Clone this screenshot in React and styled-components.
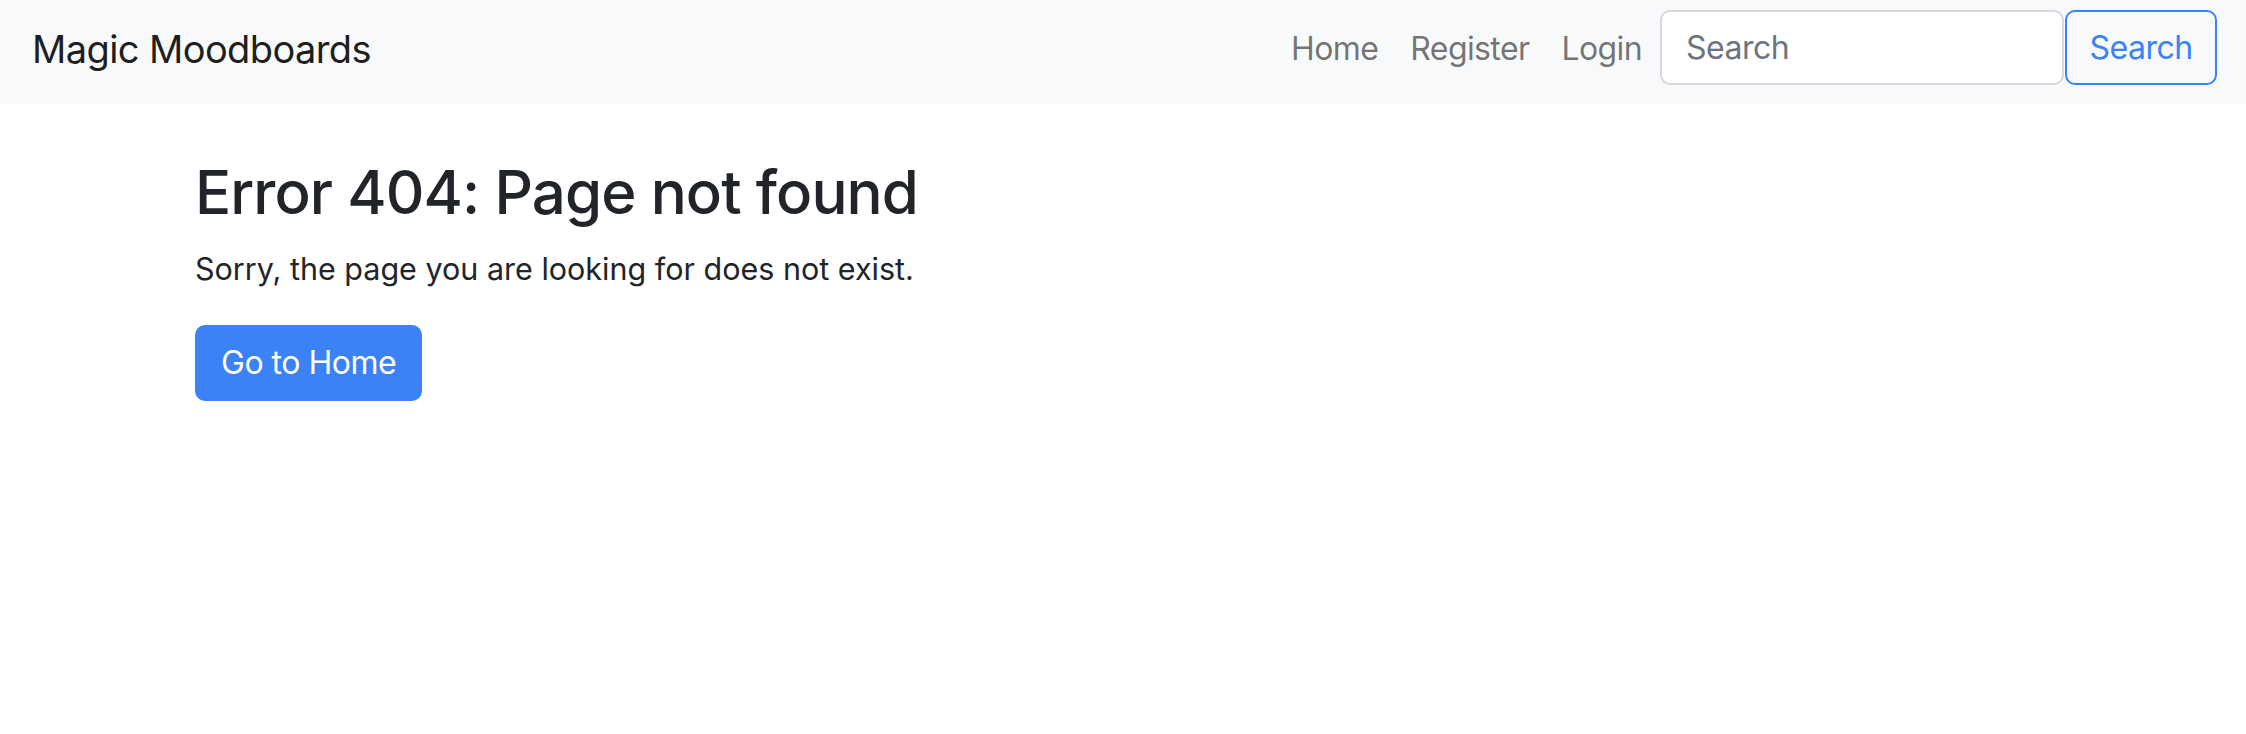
import React from "react";
import styled, { createGlobalStyle } from "styled-components";

const GlobalStyle = createGlobalStyle`
  * {
    box-sizing: border-box;
  }
  body {
    margin: 0;
    background: #fff;
    color: #212529;
    font-family: Inter, "Noto Sans", sans-serif;
  }
`;

const Navbar = styled.nav`
  display: flex;
  align-items: center;
  justify-content: space-between;
  height: 104px;
  padding: 0 29px 10px 32px;
  background-color: #f8f9fa;
`;

const Brand = styled.a`
  font-size: 38px;
  color: rgba(0, 0, 0, 0.9);
  text-decoration: none;
  letter-spacing: -0.6px;
  padding-top: 3px;
`;

const Right = styled.div`
  display: flex;
  align-items: center;
`;

const NavLinks = styled.ul`
  display: flex;
  list-style: none;
  margin: 0 2px 0 0;
  padding: 0;
`;

const NavLink = styled.a`
  display: block;
  padding: 3px 16px 0;
  font-size: 32px;
  letter-spacing: -0.6px;
  color: rgba(0, 0, 0, 0.55);
  text-decoration: none;
`;

const SearchForm = styled.form`
  display: flex;
  gap: 1px;
`;

const SearchInput = styled.input`
  width: 404px;
  height: 75px;
  padding: 0 24px;
  font-family: inherit;
  font-size: 32px;
  letter-spacing: -0.5px;
  color: #212529;
  background: #fff;
  border: 2px solid #d5d8dc;
  border-radius: 10px;
  outline: none;
  &::placeholder {
    color: #6c757d;
  }
`;

const OutlineButton = styled.button`
  width: 152px;
  height: 75px;
  font-family: inherit;
  font-size: 32px;
  letter-spacing: -0.5px;
  color: #3b82f6;
  background: transparent;
  border: 2px solid #3b82f6;
  border-radius: 10px;
  cursor: pointer;
`;

const Main = styled.main`
  padding: 52px 195px 0;
`;

const Title = styled.h1`
  margin: 0 0 18px;
  font-size: 60px;
  font-weight: 500;
  line-height: 1.2;
  letter-spacing: -0.9px;
  color: #212529;
`;

const Text = styled.p`
  margin: 0 0 33px;
  font-size: 30.5px;
  line-height: 1.5;
  letter-spacing: 0;
`;

const PrimaryButton = styled.a`
  display: inline-flex;
  align-items: center;
  height: 76px;
  padding: 0 26px;
  font-size: 32px;
  letter-spacing: -0.5px;
  color: #fff;
  background-color: #3b82f6;
  border-radius: 10px;
  text-decoration: none;
`;

const App = () => {
  return (
    <>
      <GlobalStyle />
      <Navbar>
        <Brand href="#">Magic Moodboards</Brand>
        <Right>
          <NavLinks>
            <li>
              <NavLink href="#">Home</NavLink>
            </li>
            <li>
              <NavLink href="#">Register</NavLink>
            </li>
            <li>
              <NavLink href="#">Login</NavLink>
            </li>
          </NavLinks>
          <SearchForm onSubmit={(e) => e.preventDefault()}>
            <SearchInput type="search" placeholder="Search" />
            <OutlineButton type="submit">Search</OutlineButton>
          </SearchForm>
        </Right>
      </Navbar>
      <Main>
        <Title>Error 404: Page not found</Title>
        <Text>Sorry, the page you are looking for does not exist.</Text>
        <PrimaryButton href="#">Go to Home</PrimaryButton>
      </Main>
    </>
  );
};

export default App;
